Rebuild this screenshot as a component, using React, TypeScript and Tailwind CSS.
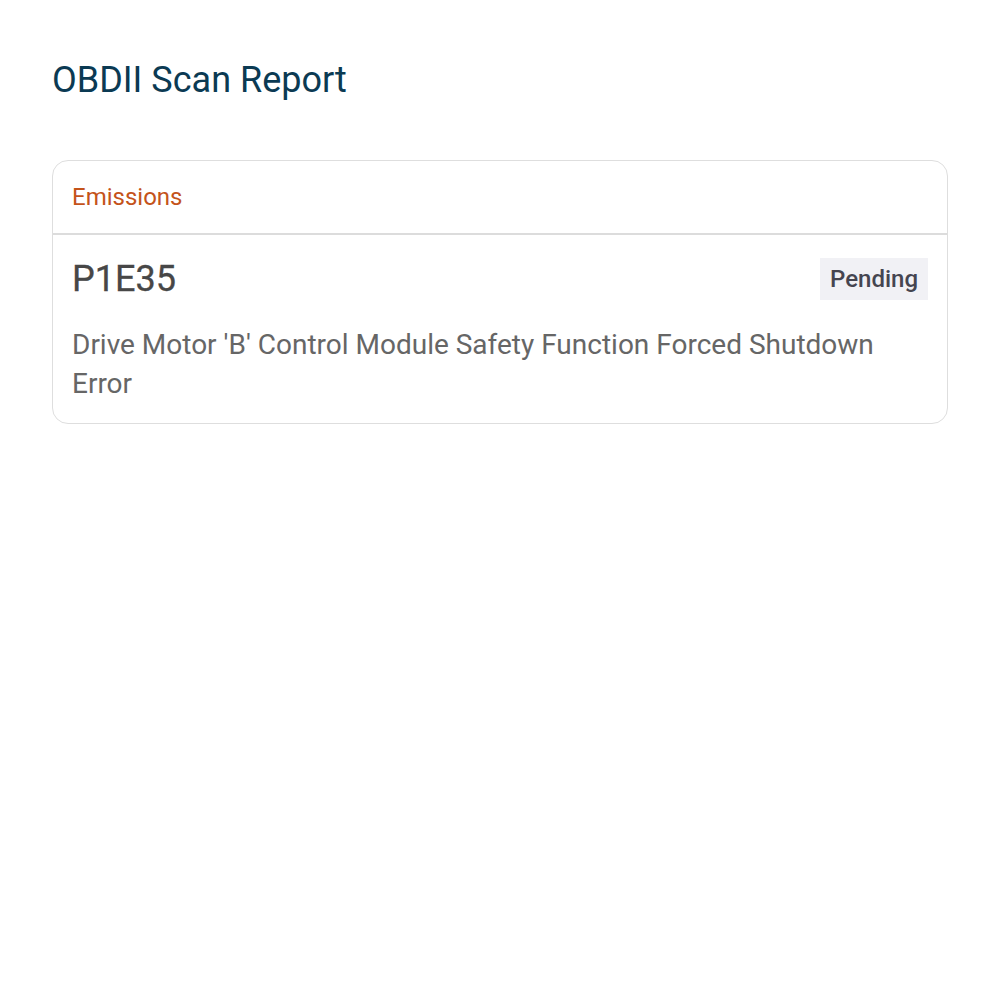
export default function App() {
  return (
    <div className="min-h-screen bg-white px-[52px] pt-[56px] font-['Roboto',sans-serif]">
      <h1 className="text-[36px] leading-[48px] text-[#0b3a53]">OBDII Scan Report</h1>

      <div className="mt-[56px] rounded-[16px] border border-[#dedede]">
        <div className="border-b-2 border-[#dcdcdc] px-[19px] py-[21px]">
          <span className="text-[24px] leading-[30px] text-[#c4531a]">Emissions</span>
        </div>
        <div className="px-[19px] pb-[20px] pt-[23px]">
          <div className="flex items-center justify-between">
            <span className="text-[36px] leading-[42px] text-[#474747] [-webkit-text-stroke:0.3px_#474747]">P1E35</span>
            <span className="bg-[#f1f1f5] px-[10px] py-[5px] text-[24px] font-medium leading-[32px] text-[#454550]">
              Pending
            </span>
          </div>
          <p className="mt-[25px] text-[28px] leading-[39px] text-[#666666]">
            Drive Motor 'B' Control Module Safety Function Forced Shutdown Error
          </p>
        </div>
      </div>
    </div>
  );
}
